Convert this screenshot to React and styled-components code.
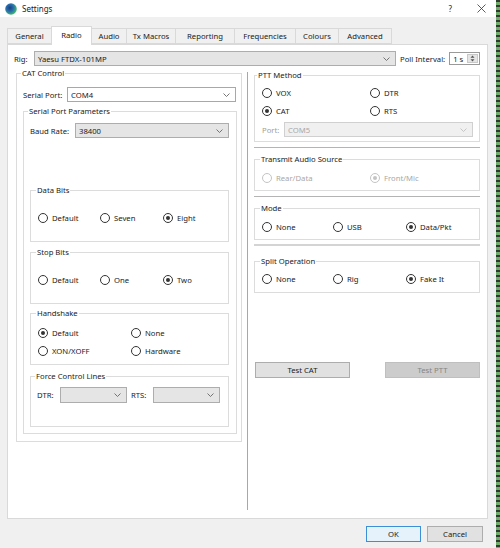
import React from 'react';
import styled, { createGlobalStyle } from 'styled-components';

const Global = createGlobalStyle`
  body {
    margin: 0;
    background: #f0f0f0;
    font-family: 'Noto Sans', 'Liberation Sans', sans-serif;
    font-size: 7.7px;
    color: #1a1a1a;
  }
  * { box-sizing: border-box; }
`;

const Screen = styled.div`
  display: flex;
  width: 500px;
  height: 548px;
`;

const Window = styled.div`
  width: 496px;
  height: 548px;
  background: #f0f0f0;
  display: flex;
  flex-direction: column;
`;

const Strip = styled.div`
  width: 4px;
  height: 548px;
  background: repeating-linear-gradient(#2f3a2f 0 2px, #6fae6a 2px 5px);
`;

const TitleBar = styled.div`
  height: 17px;
  background: #fff;
  display: flex;
  align-items: center;
  padding-left: 5px;
  font-size: 8px;
`;

const TitleText = styled.span`
  margin-left: 5px;
`;

const TitleButtons = styled.div`
  margin-left: auto;
  display: flex;
  align-items: center;
  gap: 25px;
  padding-right: 10px;
  color: #222;
`;

const Body = styled.div`
  padding: 9px 8px 0 7px;
  display: flex;
  flex-direction: column;
`;

const TabBar = styled.div`
  display: flex;
  align-items: flex-end;
  height: 18px;
  padding-left: 1px;
`;

const Tab = styled.div`
  width: ${p => p.w}px;
  height: ${p => (p.active ? 19 : 16)}px;
  margin-left: -1px;
  margin-bottom: ${p => (p.active ? -1 : 0)}px;
  border: 1px solid #d9d9d9;
  border-bottom: ${p => (p.active ? 'none' : '1px solid #d9d9d9')};
  background: ${p => (p.active ? '#fff' : '#f0f0f0')};
  display: flex;
  align-items: center;
  justify-content: center;
  position: relative;
  z-index: ${p => (p.active ? 2 : 1)};
  padding-bottom: ${p => (p.active ? 2 : 0)}px;
`;

const Panel = styled.div`
  height: 475px;
  background: #fff;
  border: 1px solid #d9d9d9;
  padding: 6px 7px 0 6px;
`;

const Row = styled.div`
  display: flex;
  align-items: center;
  height: ${p => p.h || 15}px;
  margin-top: ${p => p.mt || 0}px;
`;

const Label = styled.span`
  width: ${p => (p.w ? `${p.w}px` : 'auto')};
  margin-left: ${p => p.ml || 0}px;
  flex: none;
  color: ${p => (p.disabled ? '#a0a0a0' : 'inherit')};
  white-space: nowrap;
`;

const comboColors = {
  gray: { bg: '#e5e5e5', border: '#adadad', text: '#1a1a1a' },
  white: { bg: '#fff', border: '#a8a8a8', text: '#1a1a1a' },
  disabled: { bg: '#f0f0f0', border: '#d0d0d0', text: '#a8a8a8' },
};

const ComboBox = styled.div`
  width: ${p => p.w}px;
  height: ${p => p.h || 15}px;
  flex: none;
  display: flex;
  align-items: center;
  justify-content: space-between;
  padding: 0 5px 0 3px;
  background: ${p => comboColors[p.variant || 'gray'].bg};
  border: 1px solid ${p => comboColors[p.variant || 'gray'].border};
  color: ${p => comboColors[p.variant || 'gray'].text};
`;

const Combo = ({ w, h, variant, children }) => (
  <ComboBox w={w} h={h} variant={variant}>
    <span>{children}</span>
    <svg width="7" height="4" viewBox="0 0 7 4">
      <polyline points="0.5,0.5 3.5,3.5 6.5,0.5" fill="none" stroke={variant === 'disabled' ? '#c0c0c0' : '#666'} strokeWidth="0.9" />
    </svg>
  </ComboBox>
);

const Spin = styled.div`
  width: 32px;
  height: 13px;
  margin-left: 4px;
  border: 1px solid #9a9a9a;
  background: #fff;
  display: flex;
  align-items: center;
  justify-content: space-between;
  padding: 0 1px 0 3px;
`;

const SpinBtn = styled.div`
  width: 11px;
  height: 9px;
  background: #e5e5e5;
  border: 1px solid #c8c8c8;
  display: flex;
  align-items: center;
  justify-content: center;
`;

const Group = styled.fieldset`
  margin: ${p => p.mt || 0}px 0 0 0;
  padding: ${p => p.pad};
  border: 1px solid #dcdcdc;
  min-width: 0;
  width: ${p => (p.w ? `${p.w}px` : 'auto')};
`;

const Legend = styled.legend`
  padding: 0 1px;
  margin-left: ${p => p.ml || -2}px;
  line-height: 10px;
  height: 10px;
  font-size: 7.7px;
  color: ${p => (p.disabled ? '#1a1a1a' : 'inherit')};
`;

const Columns = styled.div`
  display: flex;
  align-items: flex-start;
  margin: 2px 0 0 2px;
`;

const Column = styled.div`
  width: 226px;
  flex: none;
  display: flex;
  flex-direction: column;
`;

const VSep = styled.div`
  width: 1px;
  height: 438px;
  margin: 4px 6px 0 5px;
  background: #a8a8a8;
  flex: none;
`;

const HSep = styled.div`
  height: ${p => p.h || 1}px;
  margin-top: ${p => p.mt || 0}px;
  background: ${p => p.color || '#b4b4b4'};
`;

const RadioGrid = styled.div`
  display: grid;
  grid-template-columns: ${p => p.cols};
  align-items: center;
  height: 10px;
  margin-top: ${p => p.mt || 0}px;
`;

const RadioItem = styled.div`
  display: flex;
  align-items: center;
  gap: 4px;
  color: ${p => (p.disabled ? '#a8a8a8' : 'inherit')};
  white-space: nowrap;
`;

const Circle = styled.span`
  width: 10px;
  height: 10px;
  border-radius: 50%;
  border: 1px solid ${p => (p.disabled ? '#c4c4c4' : '#333')};
  background: #fff;
  display: flex;
  align-items: center;
  justify-content: center;
  flex: none;

  &::after {
    content: '';
    display: ${p => (p.checked ? 'block' : 'none')};
    width: 4px;
    height: 4px;
    border-radius: 50%;
    background: ${p => (p.disabled ? '#c4c4c4' : '#333')};
  }
`;

const Radio = ({ label, checked, disabled }) => (
  <RadioItem disabled={disabled}>
    <Circle checked={checked} disabled={disabled} />
    {label}
  </RadioItem>
);

const ButtonRow = styled.div`
  display: flex;
  justify-content: space-between;
  margin-top: ${p => p.mt || 0}px;
  padding-left: ${p => p.pl || 0}px;
  gap: ${p => p.gap || 0}px;
`;

const Button = styled.div`
  width: ${p => p.w}px;
  height: 16px;
  display: flex;
  align-items: center;
  justify-content: center;
  background: ${p => (p.disabled ? '#cccccc' : p.primary ? '#e5f1fb' : '#e1e1e1')};
  border: 1px solid ${p => (p.disabled ? '#bfbfbf' : p.primary ? '#3c8fd6' : '#adadad')};
  color: ${p => (p.disabled ? '#858585' : '#1a1a1a')};
`;

const Footer = styled.div`
  display: flex;
  justify-content: flex-end;
  gap: 6px;
  margin-top: 7px;
  padding-right: 5px;
`;

const AppIcon = () => (
  <svg width="12" height="12" viewBox="0 0 12 12">
    <defs>
      <radialGradient id="ig" cx="0.4" cy="0.4" r="0.7">
        <stop offset="0" stopColor="#1a3f7a" />
        <stop offset="0.45" stopColor="#2a6db0" />
        <stop offset="0.75" stopColor="#35a87c" />
        <stop offset="1" stopColor="#6ccf5a" />
      </radialGradient>
    </defs>
    <circle cx="6" cy="6" r="5.8" fill="url(#ig)" />
  </svg>
);

const tabs = [
  ['General', 45],
  ['Radio', 41],
  ['Audio', 36],
  ['Tx Macros', 50],
  ['Reporting', 60],
  ['Frequencies', 62],
  ['Colours', 44],
  ['Advanced', 54],
];

export default function App() {
  return (
    <Screen>
      <Global />
      <Window>
        <TitleBar>
          <AppIcon />
          <TitleText>Settings</TitleText>
          <TitleButtons>
            <span>?</span>
            <svg width="9" height="9" viewBox="0 0 9 9">
              <path d="M0.5 0.5 L8.5 8.5 M8.5 0.5 L0.5 8.5" stroke="#333" strokeWidth="0.8" />
            </svg>
          </TitleButtons>
        </TitleBar>
        <Body>
          <TabBar>
            {tabs.map(([t, w]) => (
              <Tab key={t} w={w} active={t === 'Radio'}>{t}</Tab>
            ))}
          </TabBar>
          <Panel>
            <Row>
              <Label w={20}>Rig:</Label>
              <Combo w={362}>Yaesu FTDX-101MP</Combo>
              <Label ml={4}>Poll Interval:</Label>
              <Spin>
                <span>1 s</span>
                <SpinBtn>
                  <svg width="5" height="7" viewBox="0 0 5 7">
                    <path d="M2.5 0.5 L4.5 2.8 L0.5 2.8 Z M2.5 6.5 L4.5 4.2 L0.5 4.2 Z" fill="#555" />
                  </svg>
                </SpinBtn>
              </Spin>
            </Row>
            <Columns>
              <Column>
                <Group pad="9px 4px 7px 6px">
                  <Legend>CAT Control</Legend>
                  <Row>
                    <Label w={44}>Serial Port:</Label>
                    <Combo w={169} variant="white">COM4</Combo>
                  </Row>
                  <Group mt={4} pad="7px 7px 6px 6px">
                    <Legend>Serial Port Parameters</Legend>
                    <Row>
                      <Label w={45}>Baud Rate:</Label>
                      <Combo w={154}>38400</Combo>
                    </Row>
                    <Group mt={47} pad="18px 7px 18px 7px">
                      <Legend>Data Bits</Legend>
                      <RadioGrid cols="62px 63px 1fr">
                        <Radio label="Default" />
                        <Radio label="Seven" />
                        <Radio label="Eight" checked />
                      </RadioGrid>
                    </Group>
                    <Group mt={5} pad="18px 7px 18px 7px">
                      <Legend>Stop Bits</Legend>
                      <RadioGrid cols="62px 63px 1fr">
                        <Radio label="Default" />
                        <Radio label="One" />
                        <Radio label="Two" checked />
                      </RadioGrid>
                    </Group>
                    <Group mt={4} pad="10px 7px 8px 7px">
                      <Legend>Handshake</Legend>
                      <RadioGrid cols="93px 1fr">
                        <Radio label="Default" checked />
                        <Radio label="None" />
                      </RadioGrid>
                      <RadioGrid cols="93px 1fr" mt={8}>
                        <Radio label="XON/XOFF" />
                        <Radio label="Hardware" />
                      </RadioGrid>
                    </Group>
                    <Group mt={6} pad="6px 6px 23px 6px">
                      <Legend>Force Control Lines</Legend>
                      <Row h={16}>
                        <Label w={23}>DTR:</Label>
                        <Combo w={67} h={16} />
                        <Label w={22} ml={4}>RTS:</Label>
                        <Combo w={67} h={16} />
                      </Row>
                    </Group>
                  </Group>
                </Group>
              </Column>
              <VSep />
              <Column>
                <Group mt={2} pad="8px 6px 4px 7px">
                  <Legend ml={-5}>PTT Method</Legend>
                  <RadioGrid cols="108px 1fr">
                    <Radio label="VOX" />
                    <Radio label="DTR" />
                  </RadioGrid>
                  <RadioGrid cols="108px 1fr" mt={8}>
                    <Radio label="CAT" checked />
                    <Radio label="RTS" />
                  </RadioGrid>
                  <Row mt={6}>
                    <Label w={22} disabled>Port:</Label>
                    <Combo w={189} variant="disabled">COM5</Combo>
                  </Row>
                </Group>
                <HSep mt={5} />
                <Group mt={6} pad="9px 6px 7px 7px">
                  <Legend>Transmit Audio Source</Legend>
                  <RadioGrid cols="108px 1fr">
                    <Radio label="Rear/Data" disabled />
                    <Radio label="Front/Mic" checked disabled />
                  </RadioGrid>
                </Group>
                <HSep mt={5} />
                <Group mt={6} pad="9px 6px 7px 7px">
                  <Legend>Mode</Legend>
                  <RadioGrid cols="71px 73px 1fr">
                    <Radio label="None" />
                    <Radio label="USB" />
                    <Radio label="Data/Pkt" checked />
                  </RadioGrid>
                </Group>
                <HSep mt={4} h={2} color="#d4d4d4" />
                <Group mt={10} pad="8px 6px 8px 7px">
                  <Legend>Split Operation</Legend>
                  <RadioGrid cols="71px 73px 1fr">
                    <Radio label="None" />
                    <Radio label="Rig" />
                    <Radio label="Fake It" checked />
                  </RadioGrid>
                </Group>
                <ButtonRow mt={69} pl={1}>
                  <Button w={95}>Test CAT</Button>
                  <Button w={95} disabled>Test PTT</Button>
                </ButtonRow>
              </Column>
            </Columns>
          </Panel>
          <Footer>
            <Button w={55} primary>OK</Button>
            <Button w={56}>Cancel</Button>
          </Footer>
        </Body>
      </Window>
      <Strip />
    </Screen>
  );
}
